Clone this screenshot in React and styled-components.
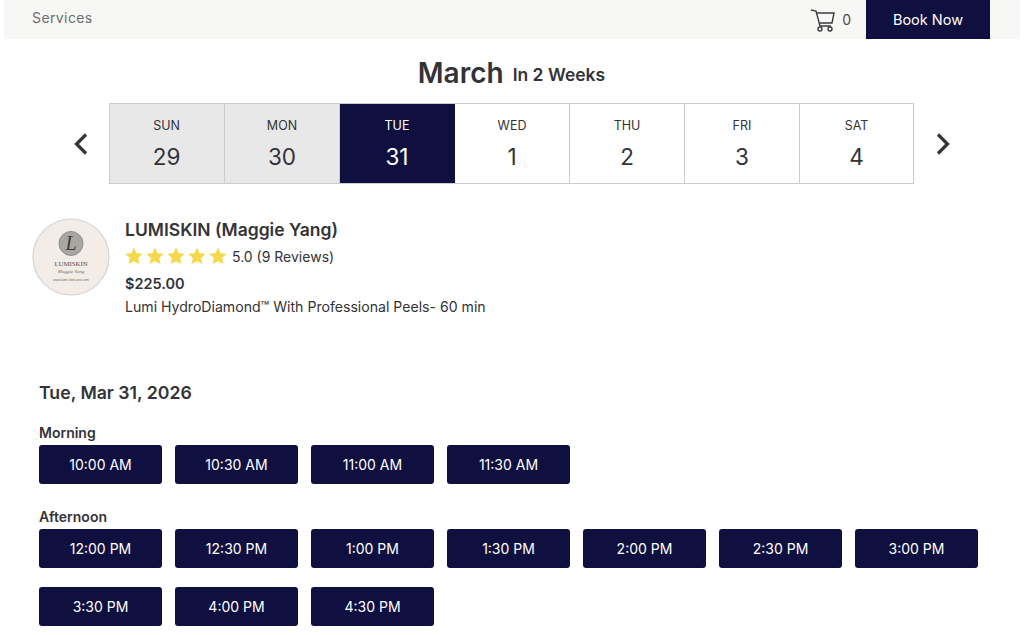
import React from "react";
import styled, { createGlobalStyle } from "styled-components";

const Global = createGlobalStyle`
  html, body { margin: 0; padding: 0; background: #fff; }
  body { font-family: "Inter", "Lato", sans-serif; color: #333338; overflow: hidden; height: 635px; }
`;
const Page = styled.div`width: 1024px; padding: 0 4px; box-sizing: border-box;`;
const TopBar = styled.header`
  height: 39px; background: #f7f7f6; display: flex; align-items: center;
  padding: 0 30px 0 28px;
`;
const NavLink = styled.span`font-size: 14px; color: #6d6d6f; letter-spacing: 0.4px; margin-bottom: 5px;`;
const Cart = styled.div`margin-left: auto; display: flex; align-items: center; gap: 6px; margin-right: 15px; color: #4a4a4e; font-size: 14px;`;
const BookNow = styled.button`
  width: 124px; height: 39px; border: 0; background: #101040; color: #fff;
  font: 400 14.5px "Inter", sans-serif;
`;
const MonthRow = styled.div`display: flex; justify-content: center; align-items: center; gap: 9px; margin-top: 15px; height: 37px; padding-right: 1px; box-sizing: border-box;`;
const Month = styled.h1`margin: 0; font-size: 28px; line-height: 36px; font-weight: 600; color: #333338;`;
const Sub = styled.span`font-size: 17.5px; font-weight: 600; color: #333338; margin-top: 4px;`;
const CalRow = styled.div`display: flex; align-items: center; margin-top: 12px; padding-left: 68px;`;
const Arrow = styled.button`
  width: 37px; height: 40px; padding: 0 ${p => p.$left ? "20px" : "0"} 0 0; margin-left: ${p => p.$left ? "0" : "10px"}; border: 0; background: none; color: #333338;
  display: flex; align-items: center; justify-content: center;
`;
const Week = styled.div`display: grid; grid-template-columns: 116px repeat(5, 115px) 114px; outline: 1px solid #ccc; outline-offset: -1px; width: 805px; box-sizing: border-box; height: 81px;`;
const Day = styled.div`
  background: ${p => p.$sel ? "#101040" : p.$past ? "#e8e8e8" : "#fff"};
  color: ${p => p.$sel ? "#fff" : "#333338"};
  border: 1px solid #ccc;
  border-left: 0;
  ${p => p.$sel && "border-color: #101040;"}
  display: flex; flex-direction: column; align-items: center;
`;
const DayName = styled.span`font-size: 12.5px; margin-top: 14px; line-height: 16px;`;
const DayNum = styled.span`font-size: 22.5px; line-height: 28px; margin-top: 9px;`;
const Provider = styled.section`display: flex; margin-top: 34px; padding-left: 28px; gap: 15px;`;
const AvatarSvg = styled.svg`width: 78px; height: 78px; flex: none;`;
const Info = styled.div`display: flex; flex-direction: column;`;
const Name = styled.div`font-size: 17.5px; font-weight: 600; line-height: 24px;`;
const Rating = styled.div`display: flex; align-items: center; margin-top: 2px; font-size: 14px; height: 24px; gap: 4px;`;
const Stars = styled.div`display: flex; gap: 1px; margin-left: -1px;`;
const Price = styled.div`font-size: 14.5px; font-weight: 600; line-height: 20px; margin-top: 6px;`;
const Desc = styled.div`font-size: 14.1px; line-height: 20px; margin-top: 3px;`;
const Slots = styled.section`padding-left: 35px; margin-top: 63px;`;
const DateTitle = styled.h2`margin: 0; font-size: 17.7px; line-height: 26px; font-weight: 600;`;
const Period = styled.h3`margin: 17px 0 0; font-size: 14px; line-height: 20px; font-weight: 600; color: #333338;`;
const Grid = styled.div`display: flex; flex-wrap: wrap; gap: 19px 13px; width: 960px; margin-top: 2px;`;
const Slot = styled.button`
  width: 123px; height: 39px; padding: 0; border: 0; border-radius: 3px; background: #101040; color: #fff;
  font: 400 14px "Inter", sans-serif;
`;
const PeriodGroup = styled.div`margin-bottom: 23px;`;

const Star = () => (
  <svg width="20" height="20" viewBox="0 0 24 24"><path fill="#f5d84e" d="M12 1.8l3.1 6.8 7.4.8-5.5 5 1.5 7.3L12 18.2l-6.5 3.5L7 14.4l-5.5-5 7.4-.8z" /></svg>
);
const Chevron = ({ dir }) => (
  <svg width="16" height="24" viewBox="0 0 16 24"><path d={dir === "l" ? "M13 2.5L3.5 12l9.5 9.5" : "M3 2.5L12.5 12 3 21.5"} fill="none" stroke="#333338" strokeWidth="3.2" /></svg>
);
const days = [["SUN",29,1],["MON",30,1],["TUE",31,0,1],["WED",1],["THU",2],["FRI",3],["SAT",4]];
const morning = ["10:00 AM","10:30 AM","11:00 AM","11:30 AM"];
const afternoon = ["12:00 PM","12:30 PM","1:00 PM","1:30 PM","2:00 PM","2:30 PM","3:00 PM","3:30 PM","4:00 PM","4:30 PM"];

export default function App() {
  return (
    <Page>
      <Global />
      <TopBar>
        <NavLink>Services</NavLink>
        <Cart>
          <svg width="26" height="24" viewBox="0 0 26 24" fill="none" stroke="#3c3c40" strokeWidth="1.4">
            <path d="M1 2l5 1 4 15h11" />
            <path d="M7 5h17l-2 10H10" />
            <circle cx="10" cy="21" r="2" /><circle cx="20" cy="21" r="2" />
          </svg>
          0
        </Cart>
        <BookNow>Book Now</BookNow>
      </TopBar>
      <MonthRow><Month>March</Month><Sub>In 2 Weeks</Sub></MonthRow>
      <CalRow>
        <Arrow $left><Chevron dir="l" /></Arrow>
        <Week>
          {days.map(([n, d, past, sel]) => (
            <Day key={n} $past={past} $sel={sel}><DayName>{n}</DayName><DayNum>{d}</DayNum></Day>
          ))}
        </Week>
        <Arrow><Chevron dir="r" /></Arrow>
      </CalRow>
      <Provider>
        <AvatarSvg viewBox="0 0 78 78">
          <circle cx="39" cy="39" r="38" fill="#f4ece6" stroke="#d4d4d4" strokeWidth="1.2" />
          <circle cx="39" cy="25.5" r="12" fill="#a9a7a4" stroke="#8f8d8b" strokeWidth="1" />
          <text x="39" y="32" textAnchor="middle" fontFamily="Liberation Serif, serif" fontStyle="italic" fontSize="20" fill="#3e3d3b">L</text>
          <text x="39" y="48" textAnchor="middle" fontFamily="Liberation Serif, serif" fontSize="6.8" fill="#4f4c4a">LUMISKIN</text>
          <text x="39" y="54.5" textAnchor="middle" fontFamily="Liberation Serif, serif" fontStyle="italic" fontSize="5" fill="#6f6b68">Maggie Yang</text>
          <text x="39" y="63" textAnchor="middle" fontFamily="Liberation Sans, sans-serif" fontSize="3.4" fill="#6f6b68">www.lumi-skincare.com</text>
        </AvatarSvg>
        <Info>
          <Name>LUMISKIN (Maggie Yang)</Name>
          <Rating>
            <Stars>{[0,1,2,3,4].map(i => <Star key={i} />)}</Stars>
            <span>5.0 (9 Reviews)</span>
          </Rating>
          <Price>$225.00</Price>
          <Desc>Lumi HydroDiamond™ With Professional Peels- 60 min</Desc>
        </Info>
      </Provider>
      <Slots>
        <DateTitle>Tue, Mar 31, 2026</DateTitle>
        <PeriodGroup>
          <Period>Morning</Period>
          <Grid>{morning.map(t => <Slot key={t}>{t}</Slot>)}</Grid>
        </PeriodGroup>
        <PeriodGroup>
          <Period>Afternoon</Period>
          <Grid>{afternoon.map(t => <Slot key={t}>{t}</Slot>)}</Grid>
        </PeriodGroup>
      </Slots>
    </Page>
  );
}
